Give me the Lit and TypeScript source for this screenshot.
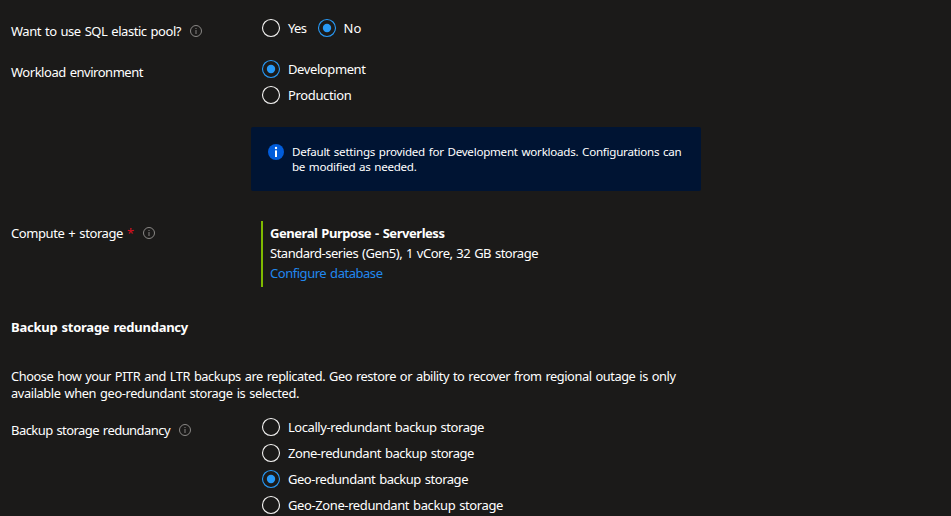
import { LitElement, html, css, svg, nothing } from "lit";
import { customElement, property, state } from "lit/decorators.js";

/** A single line of text whose tracking is adjusted to fill a given width. */
@customElement("fit-line")
class FitLine extends LitElement {
  @property({ type: Number }) width = 0;
  @property() text = "";
  static styles = css`
    :host { display: block; white-space: nowrap; }
    span { display: inline-block; white-space: nowrap; }
  `;
  firstUpdated() {
    const span = this.renderRoot.querySelector("span") as HTMLElement;
    const natural = span.getBoundingClientRect().width;
    span.style.letterSpacing = `${(this.width - natural) / this.text.length}px`;
  }
  render() {
    return html`<span>${this.text}</span>`;
  }
}

@customElement("info-icon")
class InfoIcon extends LitElement {
  static styles = css`
    :host { display: block; width: 12px; height: 12px; }
    svg { display: block; }
  `;
  render() {
    return html`<svg width="12" height="12" viewBox="0 0 12 12" fill="none">
      <circle cx="6" cy="6" r="5.5" stroke="#8a8886" stroke-width="1" />
      <path d="M6 5v4M6 3v1.1" stroke="#7c7a78" stroke-width="1.1" />
    </svg>`;
  }
}

@customElement("radio-option")
class RadioOption extends LitElement {
  @property({ type: Boolean }) checked = false;
  @property({ type: Number }) width = 0;
  @property() label = "";
  static styles = css`
    :host { display: flex; align-items: center; height: 20px; cursor: pointer; }
    svg { display: block; margin-right: 7px; flex: none; }
    fit-line { line-height: 20px; }
  `;
  render() {
    return html`<svg width="20" height="20" viewBox="0 0 20 20">
        <circle cx="10" cy="10" r="8.5" fill="none" stroke=${this.checked ? "#2899f5" : "#f3f2f1"} stroke-width="1.1" />
        ${this.checked ? svg`<circle cx="10" cy="10" r="4.2" fill="#2899f5" />` : nothing}
      </svg><fit-line .text=${this.label} .width=${this.width}></fit-line>`;
  }
}

const redundancy: [string, number][] = [
  ["Locally-redundant backup storage", 196],
  ["Zone-redundant backup storage", 186],
  ["Geo-redundant backup storage", 180],
  ["Geo-Zone-redundant backup storage", 215],
];

@customElement("app-root")
class AppRoot extends LitElement {
  @state() pool = "No";
  @state() env = "Development";
  @state() backup = "Geo-redundant backup storage";

  static styles = css`
    :host {
      display: block;
      box-sizing: border-box;
      height: 516px;
      overflow: hidden;
      padding: 18px 0 0 11px;
      background: #1b1a19;
      color: #fff;
      font: 13px/20px "Noto Sans", "Open Sans", sans-serif;
      word-spacing: 1px;
    }
    .row { display: grid; grid-template-columns: 250px 1fr; align-items: start; }
    .label { display: flex; align-items: center; height: 20px; margin-top: 3px; }
    .label info-icon { margin-left: 9px; }
    .star { color: #d80f1f; margin-left: 4px; width: 6px; font-size: 13px; }
    .inline { display: flex; gap: 10px; }
    .stack { display: flex; flex-direction: column; gap: 6px; }
    .env { margin-top: 18px; }
    .notice {
      display: flex;
      box-sizing: border-box;
      width: 450px;
      height: 64px;
      margin: 22px 0 0 240px;
      padding: 17px 17px 0;
      border-radius: 2px;
      background: #001433;
      font-size: 11.6px;
      line-height: 15px;
    }
    .notice svg { display: block; flex: none; margin-right: 8px; }
    .lines { display: flex; flex-direction: column; align-items: flex-start; }
    .compute { margin-top: 30px; }
    .compute .label { margin-top: 2px; }
    .compute .label info-icon { margin-left: 10px; }
    .plan {
      box-sizing: border-box;
      height: 66px;
      padding: 2px 0 0 7px;
      border-left: 2px solid #7fba00;
    }
    .bold { font-weight: 700; }
    .link { color: #2188ee; }
    .heading { margin-top: 30px; height: 20px; }
    .para { margin-top: 31px; line-height: 17px; font-size: 12.8px; }
    .backup { margin-top: 15px; }
  `;

  render() {
    return html`
      <div class="row">
        <div class="label"><fit-line .text=${"Want to use SQL elastic pool?"} .width=${170}></fit-line><info-icon></info-icon></div>
        <div class="inline">
          ${([["Yes", 18.5], ["No", 18]] as [string, number][]).map(([l, w]) => html`<radio-option
            .label=${l} .width=${w} .checked=${this.pool === l} @click=${() => (this.pool = l)}></radio-option>`)}
        </div>
      </div>
      <div class="row env">
        <div class="label"><fit-line .text=${"Workload environment"} .width=${132}></fit-line></div>
        <div class="stack">
          ${([["Development", 77.5], ["Production", 63.5]] as [string, number][]).map(([l, w]) => html`<radio-option
            .label=${l} .width=${w} .checked=${this.env === l} @click=${() => (this.env = l)}></radio-option>`)}
        </div>
      </div>
      <div class="notice">
        <svg width="16" height="16" viewBox="0 0 16 16">
          <circle cx="8" cy="8" r="8" fill="#015cda" />
          <rect x="7" y="6.4" width="2" height="6.6" fill="#fff" />
          <circle cx="8" cy="4" r="1.2" fill="#fff" />
        </svg>
        <div class="lines">
          <fit-line .text=${"Default settings provided for Development workloads. Configurations can"} .width=${389.5}></fit-line>
          <fit-line .text=${"be modified as needed."} .width=${124.5}></fit-line>
        </div>
      </div>
      <div class="row compute">
        <div class="label"><fit-line .text=${"Compute + storage"} .width=${112}></fit-line><span class="star">*</span><info-icon></info-icon></div>
        <div class="plan lines">
          <fit-line class="bold" .text=${"General Purpose - Serverless"} .width=${174.5}></fit-line>
          <fit-line .text=${"Standard-series (Gen5), 1 vCore, 32 GB storage"} .width=${268}></fit-line>
          <fit-line class="link" .text=${"Configure database"} .width=${112.5}></fit-line>
        </div>
      </div>
      <div class="heading bold"><fit-line .text=${"Backup storage redundancy"} .width=${177}></fit-line></div>
      <div class="para lines">
        <fit-line .text=${"Choose how your PITR and LTR backups are replicated. Geo restore or ability to recover from regional outage is only"} .width=${664.5}></fit-line>
        <fit-line .text=${"available when geo-redundant storage is selected."} .width=${288}></fit-line>
      </div>
      <div class="row backup">
        <div class="label"><fit-line .text=${"Backup storage redundancy"} .width=${159}></fit-line><info-icon></info-icon></div>
        <div class="stack">
          ${redundancy.map(([l, w]) => html`<radio-option
            .label=${l} .width=${w} .checked=${this.backup === l} @click=${() => (this.backup = l)}></radio-option>`)}
        </div>
      </div>
    `;
  }
}
